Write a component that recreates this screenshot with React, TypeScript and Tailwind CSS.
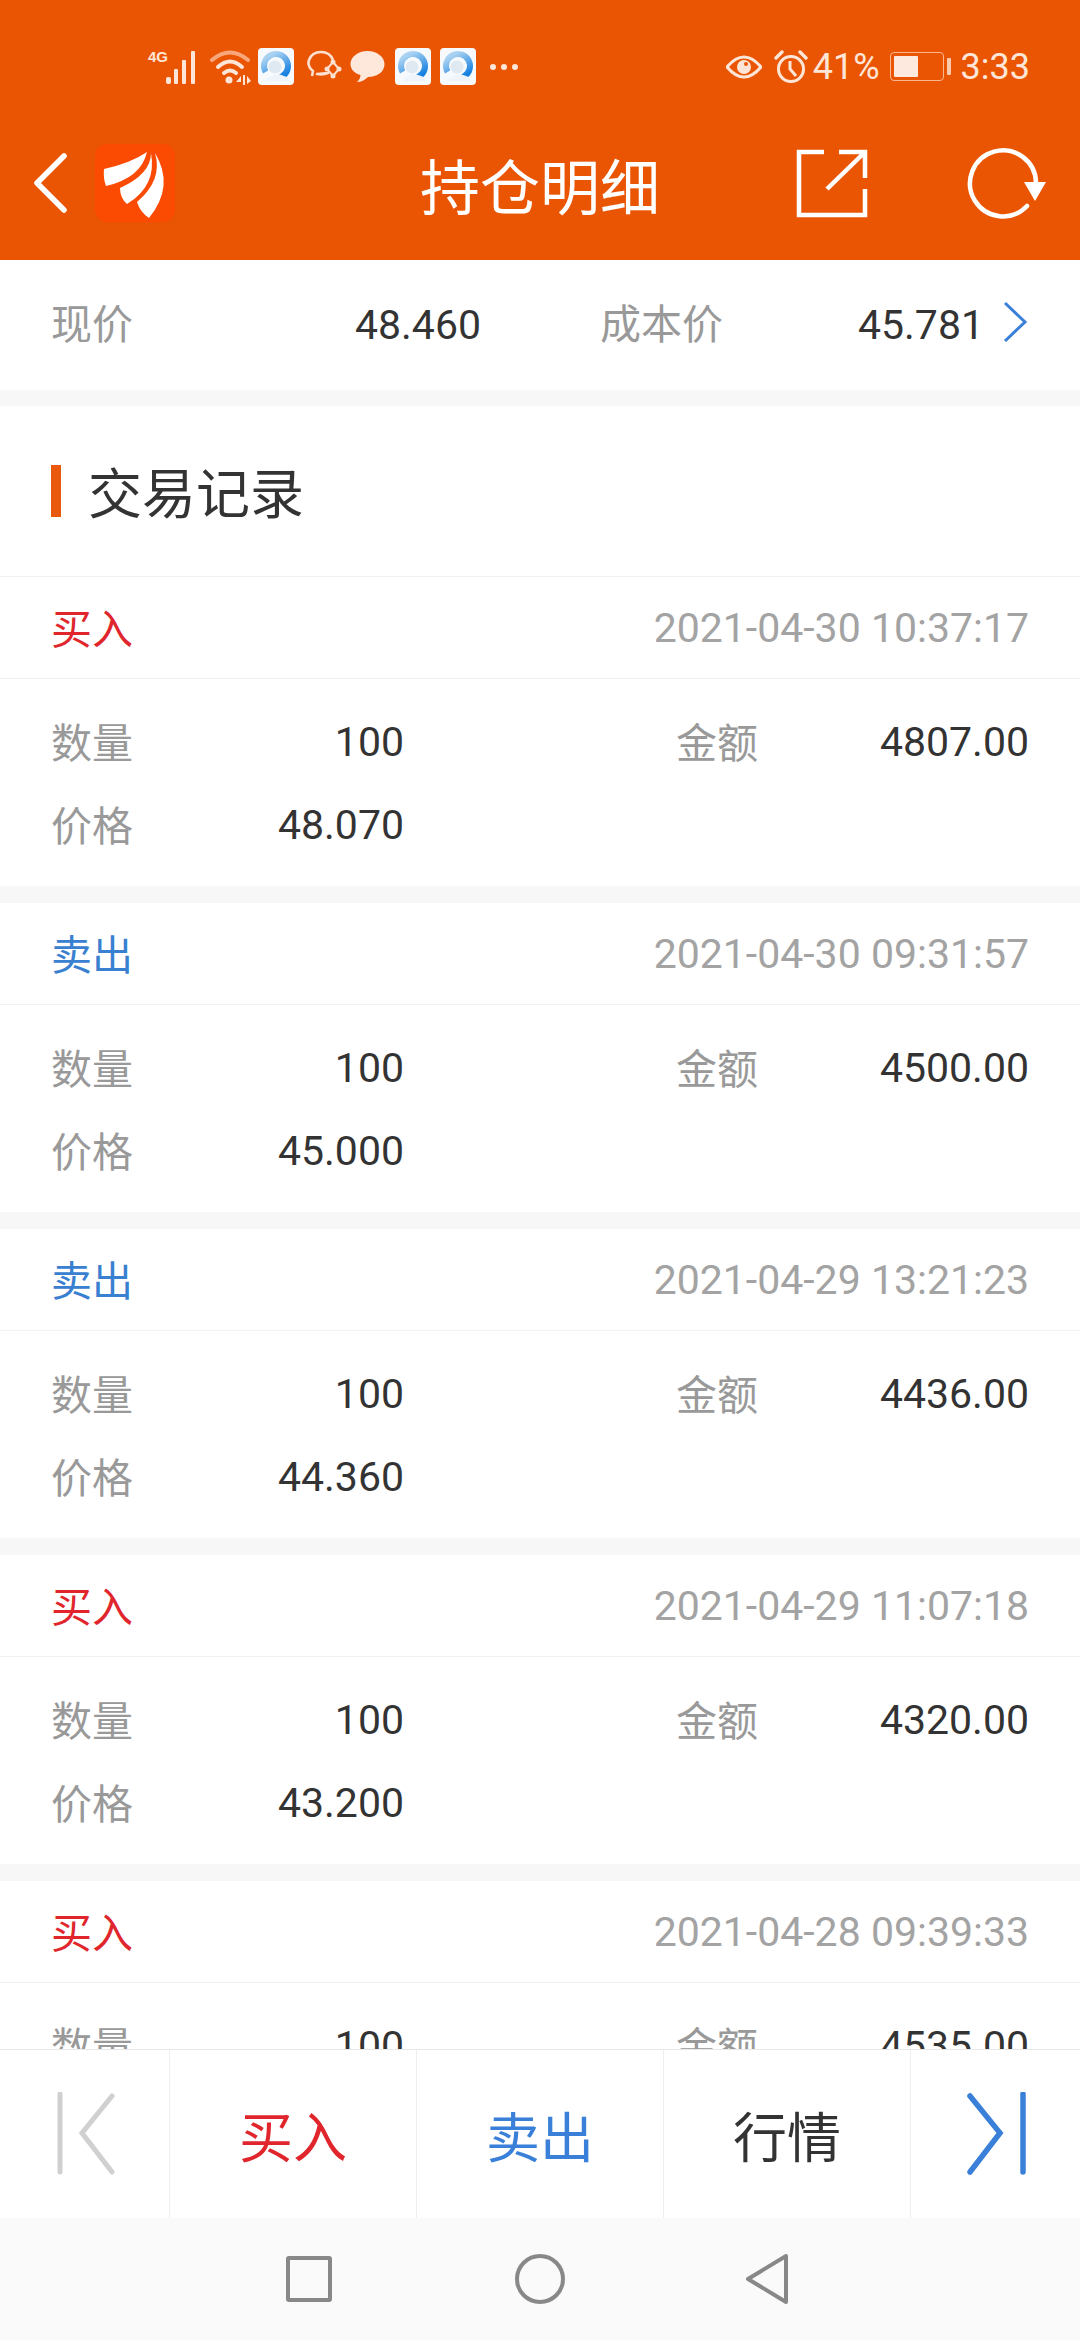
const cjk = { fontFamily: '"Noto Sans CJK SC", "Noto Sans", sans-serif' };
const roboto = { fontFamily: "Roboto, sans-serif" };

const records = [
  { side: "买入", time: "2021-04-30 10:37:17", qty: "100", amount: "4807.00", price: "48.070" },
  { side: "卖出", time: "2021-04-30 09:31:57", qty: "100", amount: "4500.00", price: "45.000" },
  { side: "卖出", time: "2021-04-29 13:21:23", qty: "100", amount: "4436.00", price: "44.360" },
  { side: "买入", time: "2021-04-29 11:07:18", qty: "100", amount: "4320.00", price: "43.200" },
  { side: "买入", time: "2021-04-28 09:39:33", qty: "100", amount: "4535.00", price: "45.350" },
];

function AppIcon({ id }: { id: string }) {
  return (
    <svg width="36" height="37" viewBox="0 0 36 37" className="shrink-0">
      <defs>
        <linearGradient id={id} x1="0" y1="0" x2="0" y2="1">
          <stop offset="0" stopColor="#1580e0" />
          <stop offset="1" stopColor="#a9d2f2" />
        </linearGradient>
      </defs>
      <rect width="36" height="37" rx="4" fill="#f7fafd" />
      <circle cx="18" cy="18" r="12" fill="none" stroke={`url(#${id})`} strokeWidth="6" strokeDasharray="58 20" transform="rotate(150 18 18)" />
      <circle cx="17" cy="19" r="6.5" fill="#dfe9f2" />
      <path d="M8 32 Q18 22 30 30 L30 33 L8 33Z" fill="#eef4f9" />
    </svg>
  );
}

function StatusLeft() {
  return (
    <div className="flex items-center pl-[148px]">
      <div className="relative h-[36px] w-[54px] shrink-0">
        <span className="absolute left-0 top-0 text-[15px] font-bold leading-[16px] text-[#fde6d8]" style={{ fontFamily: '"Liberation Sans", sans-serif' }}>
          4G
        </span>
        <svg width="54" height="36" viewBox="0 0 54 36" className="absolute left-0 top-0">
          <g fill="#fde6d8">
            <rect x="18" y="28" width="5" height="7" rx="2" />
            <rect x="26" y="20" width="4" height="15" rx="1" />
            <rect x="34" y="11" width="4" height="24" rx="1" />
            <rect x="43" y="2" width="4" height="33" rx="1" />
          </g>
        </svg>
      </div>
      <svg width="42" height="36" viewBox="0 0 42 36" className="ml-[8px] shrink-0">
        <g fill="none" strokeLinecap="round">
          <path d="M2 11 Q20 -4 38 11" stroke="#f8a77a" strokeWidth="4" />
          <path d="M8 18 Q20 7 32 18" stroke="#fde6d8" strokeWidth="4" />
          <path d="M14 24 Q20 19 26 24" stroke="#fde6d8" strokeWidth="4" />
        </g>
        <circle cx="19" cy="31" r="3.5" fill="#fde6d8" />
        <path d="M31 27 L26 33 L31 33Z M33 26 H35 V36 H33Z M37 27 L41 32 L37 35Z" fill="#fde6d8" />
      </svg>
      <div className="ml-[6px]">
        <AppIcon id="qa" />
      </div>
      <svg width="36" height="36" viewBox="0 0 36 36" className="ml-[12px] shrink-0">
        <g fill="none" stroke="#fde0cf" strokeWidth="2.6">
          <path d="M6 27 L7 22 Q1 17 3 11 Q6 3 15 3 Q24 3 27 11 M22 24 Q17 26 11 25 Z" strokeLinejoin="round" />
          <path d="M27 13 L33 20 L27 27 L21 20Z" strokeWidth="2" />
        </g>
        <g fill="#fde0cf">
          <circle cx="27" cy="13" r="2.5" />
          <circle cx="33" cy="20" r="2.5" />
          <circle cx="27" cy="27" r="2.5" />
          <circle cx="21" cy="20" r="2.5" />
        </g>
      </svg>
      <svg width="35" height="34" viewBox="0 0 35 34" className="ml-[8px] shrink-0">
        <path d="M17.5 1 C27 1 34.5 7 34.5 14 C34.5 22 27 27 18 27 C15 30 11 32 7 32 C9.5 30 10.5 27 10.5 25 C4 23 0.5 19 0.5 14 C0.5 7 8 1 17.5 1Z" fill="#fde8db" />
      </svg>
      <div className="ml-[10px]">
        <AppIcon id="qb" />
      </div>
      <div className="ml-[9px]">
        <AppIcon id="qc" />
      </div>
      <div className="ml-[14px] flex gap-[5px]">
        <span className="size-[6px] rounded-full bg-[#fde6d8]" />
        <span className="size-[6px] rounded-full bg-[#fde6d8]" />
        <span className="size-[6px] rounded-full bg-[#fde6d8]" />
      </div>
    </div>
  );
}

function StatusRight() {
  return (
    <div className="flex items-center pr-[50px] text-[#fde6d8]">
      <svg width="36" height="28" viewBox="0 0 36 28" className="shrink-0">
        <path d="M1 14 Q18 -6 35 14 Q18 34 1 14Z" fill="none" stroke="currentColor" strokeWidth="3" />
        <circle cx="18" cy="14" r="7" fill="currentColor" />
        <circle cx="20" cy="11" r="2" fill="#ea5504" />
      </svg>
      <svg width="34" height="34" viewBox="0 0 34 34" className="ml-[12px] shrink-0">
        <circle cx="17" cy="19" r="12.5" fill="none" stroke="currentColor" strokeWidth="3" />
        <path d="M16 11 V19 L22 26" fill="none" stroke="currentColor" strokeWidth="3" />
        <path d="M2 8 L8 2 M26 2 L32 8" stroke="currentColor" strokeWidth="3.4" strokeLinecap="round" />
      </svg>
      <span className="ml-[5px] text-[36px] leading-none" style={roboto}>
        41%
      </span>
      <div className="ml-[10px] flex items-center">
        <div className="h-[29px] w-[54px] rounded-[4px] border-[1.5px] border-[#fbb78f] p-[3px]">
          <div className="h-full w-[24px] rounded-[1px] bg-[#fde9dd]" />
        </div>
        <div className="ml-[3px] h-[17px] w-[4px] rounded-[1px] bg-[#fbc9ac]" />
      </div>
      <span className="ml-[10px] text-[36px] leading-none" style={roboto}>
        3:33
      </span>
    </div>
  );
}

function Logo() {
  return (
    <div className="ml-[28px] flex h-[78px] w-[80px] items-center justify-center rounded-[12px] bg-[#fb4a02]">
      <svg width="80" height="78" viewBox="0 0 80 78">
        <g fill="#fff">
          <path d="M52 8 Q36 19 9 25 Q8 34 11 42 Q46 34 52 8Z" />
          <path d="M56 9 Q56 30 25 44 Q25 54 32 60 Q62 42 56 9Z" />
          <path d="M60 9 Q68 36 42 58 Q45 68 54 74 Q80 42 60 9Z" />
        </g>
      </svg>
    </div>
  );
}

function Header() {
  return (
    <header className="h-[260px] shrink-0 bg-[#ea5504] pt-[48px]">
      <div className="flex h-[37px] items-center justify-between">
        <StatusLeft />
        <StatusRight />
      </div>
      <div className="mt-[59px] grid h-[78px] grid-cols-[1fr_auto_1fr] items-center" style={cjk}>
        <div className="flex items-center pl-[34px]">
          <svg width="33" height="60" viewBox="0 0 33 60" className="shrink-0">
            <path d="M30 3 L3 30 L30 57" fill="none" stroke="#fff" strokeWidth="5.5" strokeLinecap="round" strokeLinejoin="round" />
          </svg>
          <Logo />
        </div>
        <h1 className="pt-[2px] text-[60px] leading-none font-normal text-white">持仓明细</h1>
        <div className="flex items-center justify-end pr-[33px]">
          <svg width="72" height="72" viewBox="0 0 72 72" className="shrink-0">
            <path d="M28 5 H3 V68 H69 V42 M43 5 H69 V31 M69 5 L31 42" fill="none" stroke="#fff" strokeWidth="4.5" />
          </svg>
          <svg width="80" height="72" viewBox="0 0 80 72" className="ml-[99px] shrink-0">
            <path d="M60 59 A33 33 0 1 1 69 36" fill="none" stroke="#fff" strokeWidth="4.5" strokeLinecap="round" />
            <path d="M57 35 H79 L68 54Z" fill="#fff" />
          </svg>
        </div>
      </div>
    </header>
  );
}

function PriceRow() {
  return (
    <div className="flex h-[130px] shrink-0 items-center pr-[51px] pl-[51px] text-[41px] leading-none" style={cjk}>
      <span className="w-[120px] -translate-y-[4px] text-[#999]">现价</span>
      <span className="w-[310px] text-right text-[#333]" style={roboto}>
        48.460
      </span>
      <span className="ml-[119px] -translate-y-[4px] text-[#999]">成本价</span>
      <span className="flex-1 text-right text-[#333]" style={roboto}>
        45.781
      </span>
      <svg width="28" height="44" viewBox="0 0 28 44" className="mb-[6px] ml-[17px] shrink-0">
        <path d="M4 3 L24 22 L4 41" fill="none" stroke="#3a80d8" strokeWidth="3" />
      </svg>
    </div>
  );
}

function Field({ label, value }: { label: string; value: string }) {
  return (
    <div className="flex items-center justify-between">
      <span className="-translate-y-[2px] text-[#999]">{label}</span>
      <span className="text-[#333]" style={roboto}>
        {value}
      </span>
    </div>
  );
}

function Record({ side, time, qty, amount, price }: (typeof records)[number]) {
  return (
    <section className="shrink-0 border-b-[17px] border-[#f7f7f7] bg-white text-[41px] leading-none" style={cjk}>
      <div className="flex h-[102px] items-center justify-between border-b border-[#f2f2f2] px-[51px]">
        <span className={`-translate-y-[1px] ${side === "买入" ? "text-[#e0262c]" : "text-[#3a80d0]"}`}>{side}</span>
        <span className="translate-y-[1px] text-[#a3a3a3]" style={roboto}>
          {time}
        </span>
      </div>
      <div className="grid h-[207px] grid-cols-[353px_353px] content-start justify-between gap-y-[27px] px-[51px] pt-[35px] leading-[56px]">
        <Field label="数量" value={qty} />
        <Field label="金额" value={amount} />
        <Field label="价格" value={price} />
      </div>
    </section>
  );
}

function BottomBar() {
  return (
    <div className="relative flex h-[169px] shrink-0 border-t border-[#e8e8e8] bg-white text-[54px]" style={cjk}>
      <div className="flex w-[170px] items-center border-r border-[#eee] pl-[57px]">
        <svg width="58" height="84" viewBox="0 0 58 84">
          <path d="M3 2 V80 M55 4 L25 41 L55 80" fill="none" stroke="#d0d0d0" strokeWidth="5" strokeLinecap="round" />
        </svg>
      </div>
      <div className="flex w-[247px] items-center justify-center border-r border-[#eee] text-[#e0262c]">买入</div>
      <div className="flex w-[247px] items-center justify-center border-r border-[#eee] text-[#3a80d8]">卖出</div>
      <div className="flex w-[247px] items-center justify-center border-r border-[#eee] text-[#333]">行情</div>
      <div className="flex flex-1 items-center pl-[56px]">
        <svg width="62" height="84" viewBox="0 0 62 84">
          <path d="M3 4 L33 41 L3 80" fill="none" stroke="#3a80d8" strokeWidth="5.5" strokeLinecap="round" />
          <path d="M56 2 V80" fill="none" stroke="#3a80d8" strokeWidth="5.5" strokeLinecap="round" />
        </svg>
      </div>
    </div>
  );
}

function NavBar() {
  return (
    <div className="flex h-[122px] shrink-0 items-center bg-[#fafafa] pl-[286px]">
      <div className="h-[46px] w-[46px] rounded-[3px] border-[4px] border-[#888]" />
      <div className="ml-[183px] h-[50px] w-[50px] rounded-full border-[4px] border-[#888]" />
      <svg width="44" height="52" viewBox="0 0 44 52" className="ml-[180px] shrink-0">
        <path d="M41 3 V49 L3 26Z" fill="none" stroke="#888" strokeWidth="4" strokeLinejoin="round" />
      </svg>
    </div>
  );
}

export default function App() {
  return (
    <div className="flex h-[2340px] w-[1080px] flex-col overflow-hidden bg-white">
      <Header />
      <PriceRow />
      <div className="h-[16px] shrink-0 bg-[#f7f7f7]" />
      <div className="flex min-h-0 flex-1 flex-col overflow-hidden">
        <div className="flex h-[171px] shrink-0 items-center border-b border-[#f2f2f2] pl-[51px]" style={cjk}>
          <span className="h-[52px] w-[10px] bg-[#e8590c]" />
          <span className="ml-[27px] text-[54px] leading-none text-[#333]">交易记录</span>
        </div>
        {records.map((r) => (
          <Record key={r.time} {...r} />
        ))}
      </div>
      <BottomBar />
      <NavBar />
    </div>
  );
}
